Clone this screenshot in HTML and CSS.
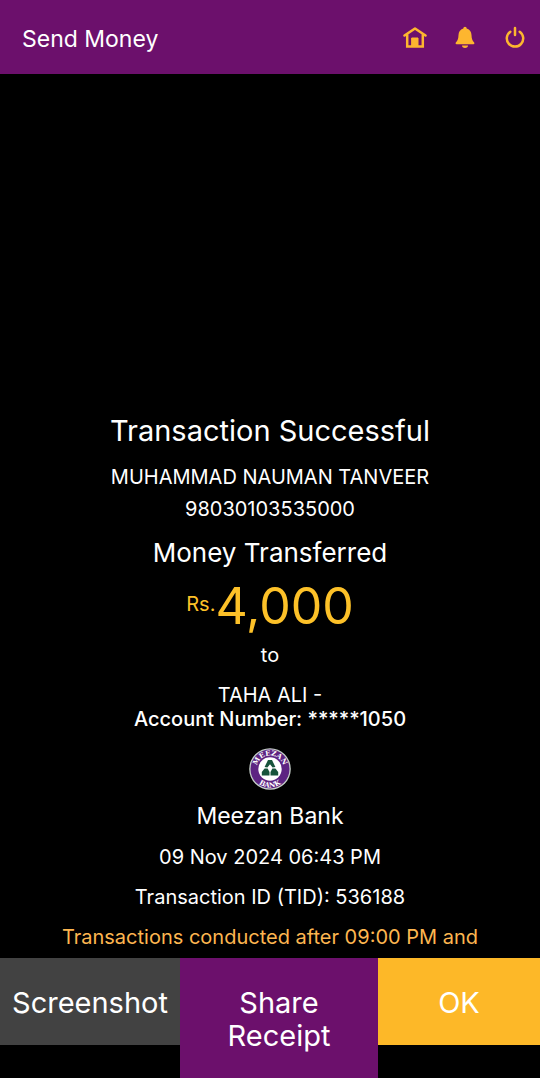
FILE: index.html
```html
<!DOCTYPE html>
<html lang="en">
<head>
<meta charset="utf-8">
<meta name="viewport" content="width=device-width, initial-scale=1">
<title>Send Money</title>
<link rel="stylesheet" href="styles.css">
</head>
<body>
<header class="bar">
  <h1 class="bar-title">Send Money</h1>
  <nav class="bar-actions">
    <button class="icon-button" type="button" aria-label="Home">
      <svg viewBox="0 2 24 24" fill="none" stroke="currentColor" stroke-width="2.500" stroke-linejoin="round" stroke-linecap="round"><path d="M1.500 10.500 12 3.500l10.500 7"/><path d="M4.200 10v11.500h15.600V10" stroke-linejoin="miter"/><path d="M9 13h6v8H9z" fill="currentColor" stroke-width="1" stroke-linejoin="miter"/></svg>
    </button>
    <button class="icon-button" type="button" aria-label="Notifications">
      <svg viewBox="0 2 24 24" fill="currentColor"><path d="M10.300 3.400a1.700 1.700 0 0 1 3.400 0C17 4.300 18.300 6.700 18.500 10c.2 3.600.6 5.500 2.700 7.600.4.900.2 1.700-.7 1.700h-17c-.9 0-1.100-.8-.7-1.700C4.900 15.500 5.300 13.600 5.500 10c.2-3.300 1.500-5.700 4.800-6.600z"/><path d="M9 20.600h6a3 2.400 0 0 1-6 0z"/></svg>
    </button>
    <button class="icon-button" type="button" aria-label="Log out">
      <svg viewBox="0 2 24 24" fill="none" stroke="currentColor" stroke-width="2.500" stroke-linecap="round"><path d="M7.300 6.700a8.200 8.200 0 1 0 9.400 0"/><path d="M12 3v7"/></svg>
    </button>
  </nav>
</header>
<main class="receipt">
  <h2 class="title">Transaction Successful</h2>
  <p class="line">MUHAMMAD NAUMAN TANVEER</p>
  <p class="line">98030103535000</p>
  <h3 class="subtitle">Money Transferred</h3>
  <p class="amount"><span class="currency">Rs.</span><span>4,000</span></p>
  <p class="line">to</p>
  <p class="payee">TAHA ALI -<br><strong class="account">Account Number: *****1050</strong></p>
  <svg class="logo" viewBox="0 0 42 42" role="img" aria-label="Meezan Bank logo">
    <circle cx="21" cy="21" r="20.800" fill="#c6d0c9"/>
    <circle cx="21" cy="21" r="19.500" fill="#5d2482"/>
    <circle cx="21" cy="21" r="11.700" fill="#fff"/>
    <path id="arc-top" d="M8.700 26.500a13.500 13.500 0 1 1 24.600 0" fill="none"/>
    <path id="arc-bottom" d="M2.500 21a18.500 18.500 0 0 0 37 0" fill="none"/>
    <text class="logo-text"><textPath href="#arc-top" startOffset="50%">MEEZAN</textPath></text>
    <text class="logo-text"><textPath href="#arc-bottom" startOffset="50%">BANK</textPath></text>
    <g fill="#17533b"><path d="M19 12h4l3.400 7-2.800.6L21 16.200l-2.600 3.400-2.800-.6z"/><path d="M15.600 20.400h3l1.900 3.600v3.400h-7.700V24z"/><path d="M23.400 20.400h3l2.800 3.600v3.400h-7.700V24z"/></g>
  </svg>
  <p class="bank">Meezan Bank</p>
  <p class="line detail">09 Nov 2024 06:43 PM</p>
  <p class="line detail">Transaction ID (TID): 536188</p>
  <p class="line detail note">Transactions conducted after 09:00 PM and</p>
</main>
<footer class="actions">
  <button class="action action-shot" type="button">Screenshot</button>
  <button class="action action-share" type="button">Share Receipt</button>
  <button class="action action-ok" type="button">OK</button>
</footer>
</body>
</html>
```
FILE: styles.css
```css
* { box-sizing: border-box; }

body {
  margin: 0;
  min-height: 100vh;
  display: flex;
  flex-direction: column;
  background: #000;
  color: #fff;
  font-family: Inter, "Noto Sans", sans-serif;
  font-size: 20px;
}

h1, h2, h3, p { margin: 0; font-weight: inherit; }

button {
  border: 0;
  color: inherit;
  font: inherit;
  cursor: pointer;
}

.bar {
  display: flex;
  align-items: center;
  justify-content: space-between;
  padding: 21px 13px 17px 22px;
  background: #6c106c;
}

.bar-title { font-size: 23px; line-height: 36px; }

.bar-actions { display: flex; gap: 26px; }

.icon-button {
  padding: 0;
  background: none;
  color: #fdb62f;
}

.icon-button svg { display: block; width: 24px; height: 26px; }

.receipt {
  flex: 1;
  display: flex;
  flex-direction: column;
  align-items: center;
  justify-content: flex-end;
  padding-bottom: 5px;
  text-align: center;
}

.title { margin-bottom: 10px; font-size: 29px; line-height: 40px; }
.line { line-height: 32px; }
.subtitle { margin-top: 10px; font-size: 26px; line-height: 36px; }

.amount {
  display: flex;
  align-items: center;
  margin-top: 2px;
  color: #fdc128;
  font-size: 50px;
  line-height: 66px;
}

.currency { font-size: 20px; line-height: 24px; padding-bottom: 4px; }

.payee { margin-top: 12px; line-height: 24px; }
.account { font-weight: 500; }
.logo { width: 42px; height: 42px; margin: 17px 0 10px; }

.logo-text {
  fill: #fff;
  font-family: "DejaVu Serif", serif;
  font-size: 7px;
  font-weight: 700;
  text-anchor: middle;
}

.bank { margin-bottom: 1px; font-size: 23px; line-height: 32px; }
.detail { margin-top: 8px; }
.note { color: #fdb650; }

.actions {
  display: grid;
  grid-template-columns: 10fr 11fr 9fr;
  align-items: start;
}

.action {
  padding: 28px 12px 26px;
  font-size: 29px;
  line-height: 33px;
}

.action-shot { background: #424242; }
.action-share { background: #6c106c; padding-inline: 40px; }
.action-ok { background: #fdb828; }
```
